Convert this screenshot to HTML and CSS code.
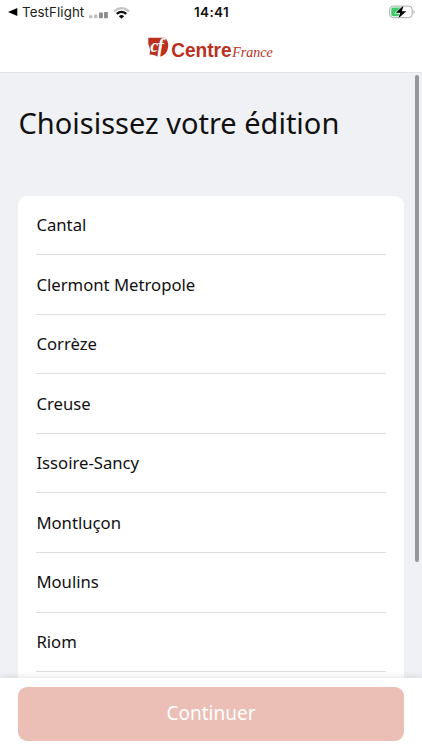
FILE: index.html
```
<!DOCTYPE html>
<html lang="fr">
<head>
<meta charset="utf-8">
<title>Choisissez votre édition</title>
<link rel="stylesheet" href="styles.css">
</head>
<body>
<div class="app">
  <header class="header">
    <div class="status">
      <div class="status-left">
        <svg class="back" width="10" height="10" viewBox="0 0 10 10"><path d="M0 5 9.3.9v8.2z"/></svg>
        <span class="source">TestFlight</span>
        <svg class="signal" width="20" height="8" viewBox="0 0 20 8"><g fill="#c0c0c0"><rect x="0" y="4.2" width="3.5" height="3" rx=".6"/><rect x="5" y="3.4" width="3.5" height="3.8" rx=".6"/></g><g fill="#8e8e8e"><rect x="10" y="1.6" width="3.9" height="5.6" rx=".6"/><rect x="15" y="1" width="3.9" height="6.2" rx=".6"/></g></svg>
        <svg class="wifi" width="17" height="12" viewBox="0 0 17 12"><path d="M1 4.3Q8.5-2 16 4.3" fill="none" stroke="#c4c4c4" stroke-width="2.2"/><path d="M3.7 6.9Q8.5 2.9 13.3 6.9" fill="none" stroke="#111" stroke-width="2.3"/><path d="M5.8 9.2Q8.5 7 11.2 9.2L8.5 11.7z" fill="#111"/></svg>
      </div>
      <span class="clock">14:41</span>
      <svg class="battery" width="26" height="14" viewBox="0 0 26 14"><rect x=".6" y="1.1" width="22.6" height="11.6" rx="3.6" fill="#fff" stroke="#aaa"/><path d="M24.5 5.2q1.3.5 1.3 1.8t-1.3 1.8z" fill="#aaa"/><path d="M4.2 2.6H12v8.6H4.2Q2.2 11.2 2.2 9.2V4.6q0-2 2-2z" fill="#40cb68"/><path d="M14.6.6 6.8 7.8h4.5L9.2 13.4l8.2-7.2h-4.5z" fill="#000" stroke="#fff" stroke-width="1.2" paint-order="stroke"/></svg>
    </div>
    <div class="brand">
      <svg width="130" height="28" viewBox="-2 0 130 28">
        <path d="M.3 1.8H16.5Q20.6 4.5 20.2 10.5 19.5 19.5 10 21.3 7 18.5 1.5 18.6 3 14 .3 8Z" fill="#bb301d"/>
        <text class="mono" x="2.2" y="16.4">c</text>
        <text class="mono mono-f" x="9.2" y="17">f</text>
        <text class="centre" x="23.2" y="20.8" textLength="60.5" lengthAdjust="spacingAndGlyphs">Centre</text>
        <text class="france" x="84.3" y="20.8" textLength="40.5" lengthAdjust="spacingAndGlyphs">France</text>
      </svg>
    </div>
  </header>
  <main class="content">
    <h1>Choisissez votre édition</h1>
    <ul class="editions">
      <li>Cantal</li>
      <li>Clermont Metropole</li>
      <li>Corrèze</li>
      <li>Creuse</li>
      <li>Issoire-Sancy</li>
      <li>Montluçon</li>
      <li>Moulins</li>
      <li>Riom</li>
      <li></li>
    </ul>
    <div class="scroll-thumb"></div>
  </main>
  <footer class="footer"><button class="continue">Continuer</button></footer>
</div>
</body>
</html>
```
FILE: styles.css
```
* { box-sizing: border-box; }
body { margin: 0; font-family: "Noto Sans", sans-serif; color: #111; }
svg { display: block; flex: none; }
.app { height: 750px; display: flex; flex-direction: column; overflow: hidden; background: #f0f1f4; }
.header { height: 73px; flex: none; background: #fff; border-bottom: 1px solid #e3e4e6; }
.status { height: 24px; display: grid; grid-template-columns: 1fr auto 1fr; align-items: center; padding: 0 7px 0 8px; font-family: Inter, sans-serif; line-height: 24px; }
.status-left { display: flex; align-items: center; }
.source { margin-left: 4px; width: 67px; font-size: 13.3px; letter-spacing: .1px; color: #222; white-space: nowrap; }
.signal { margin-top: 5px; }
.wifi { margin-left: 4px; margin-top: 1px; }
.clock { font-size: 13.5px; font-weight: 600; letter-spacing: .35px; }
.battery { justify-self: end; margin-top: -1px; }
.brand { display: flex; justify-content: center; padding-top: 12px; }
.mono { font: italic bold 18px "Liberation Serif", serif; fill: #fff; }
.mono-f { font-size: 20px; }
.centre { font: bold 19.5px "Liberation Sans", sans-serif; fill: #bb301d; }
.france { font: italic 14.5px "Liberation Serif", serif; fill: #bb301d; }
.content { position: relative; flex: 1; min-height: 0; overflow: hidden; padding: 29px 18px 0; }
h1 { margin: 0; height: 94px; font-size: 29px; line-height: 42px; font-weight: 400; white-space: nowrap; text-indent: .5px; }
.editions { margin: 0; padding: 0 18px; list-style: none; background: #fff; border-radius: 9px; }
.editions li { height: 59.55px; display: flex; align-items: center; padding-bottom: 1px; text-indent: .4px; border-bottom: 1px solid #dcdddf; font-size: 16.7px; }
.editions li:first-child { height: 59.3px; padding-bottom: 1.2px; }
.scroll-thumb { position: absolute; right: 3.5px; top: 2px; width: 3.5px; height: 487px; border-radius: 2px; background: #969698; }
.footer { position: relative; height: 72px; flex: none; padding: 9px 18px; background: #fff; box-shadow: 0 0 8px rgba(0, 0, 0, .13); }
.continue { display: block; width: 100%; height: 54px; padding: 0 0 2px; border: 0; border-radius: 9px; background: #ebbeb6; color: #fff; font: 19px "Noto Sans", sans-serif; }
```
